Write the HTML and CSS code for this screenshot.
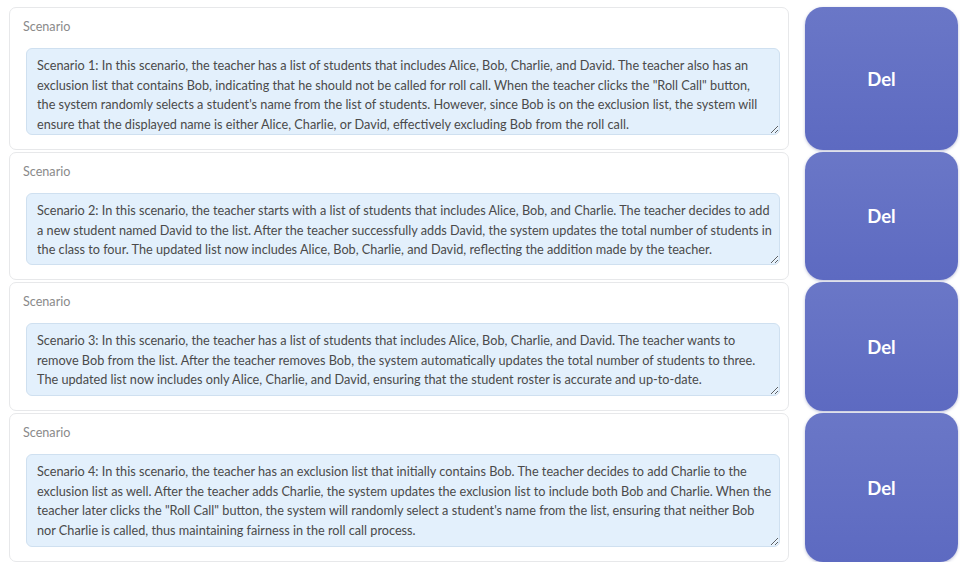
FILE: index.html
```html
<!DOCTYPE html>
<html>
<head>
<meta charset="utf-8">
<link rel="stylesheet" href="styles.css">
</head>
<body>
<main class="list">
  <div class="row">
    <section class="card">
      <label class="label">Scenario</label>
      <textarea class="box box-1" readonly>Scenario 1: In this scenario, the teacher has a list of students that includes Alice, Bob, Charlie, and David. The teacher also has an
exclusion list that contains Bob, indicating that he should not be called for roll call. When the teacher clicks the "Roll Call" button,
the system randomly selects a student's name from the list of students. However, since Bob is on the exclusion list, the system will
ensure that the displayed name is either Alice, Charlie, or David, effectively excluding Bob from the roll call.</textarea>
    </section>
    <button class="del">Del</button>
  </div>
  <div class="row">
    <section class="card">
      <label class="label">Scenario</label>
      <textarea class="box box-3" readonly>Scenario 2: In this scenario, the teacher starts with a list of students that includes Alice, Bob, and Charlie. The teacher decides to add
a new student named David to the list. After the teacher successfully adds David, the system updates the total number of students in
the class to four. The updated list now includes Alice, Bob, Charlie, and David, reflecting the addition made by the teacher.</textarea>
    </section>
    <button class="del">Del</button>
  </div>
  <div class="row">
    <section class="card">
      <label class="label">Scenario</label>
      <textarea class="box box-3b" readonly>Scenario 3: In this scenario, the teacher has a list of students that includes Alice, Bob, Charlie, and David. The teacher wants to
remove Bob from the list. After the teacher removes Bob, the system automatically updates the total number of students to three.
The updated list now includes only Alice, Charlie, and David, ensuring that the student roster is accurate and up-to-date.</textarea>
    </section>
    <button class="del">Del</button>
  </div>
  <div class="row">
    <section class="card">
      <label class="label">Scenario</label>
      <textarea class="box box-4" readonly>Scenario 4: In this scenario, the teacher has an exclusion list that initially contains Bob. The teacher decides to add Charlie to the
exclusion list as well. After the teacher adds Charlie, the system updates the exclusion list to include both Bob and Charlie. When the
teacher later clicks the "Roll Call" button, the system will randomly select a student's name from the list, ensuring that neither Bob
nor Charlie is called, thus maintaining fairness in the roll call process.</textarea>
    </section>
    <button class="del">Del</button>
  </div>
</main>
</body>
</html>
```
FILE: styles.css
```css
* { box-sizing: border-box; }
html, body { margin: 0; padding: 0; background: #ffffff; }
body { font-family: Lato, "Open Sans", sans-serif; }

.list {
  display: flex;
  flex-direction: column;
  gap: 2px;
  padding: 7px 2px 0 9px;
}

.row {
  display: flex;
  gap: 16px;
}

.card {
  flex: 1;
  display: flex;
  flex-direction: column;
  background: #fff;
  border: 1px solid #e7e8ea;
  border-radius: 7px;
  padding: 12px 8px 14px 16px;
}

.label {
  font-size: 12.6px;
  line-height: 14px;
  color: #8a8a8a;
  margin-left: -3px;
  margin-bottom: 14px;
}

.box {
  display: block;
  width: 100%;
  font-family: Lato, "Open Sans", sans-serif;
  font-size: 12.7px;
  line-height: 19.7px;
  color: #4a4a4a;
  background: #e3f0fc;
  border: 1px solid #cfe0f0;
  border-radius: 6px;
  padding: 7px 4px 5px 10px;
  white-space: pre;
  overflow: hidden;
  resize: vertical;
  outline: none;
}

.box-1 { height: 87px; }
.box-3 { height: 72px; }
.box-3b { height: 73px; }
.box-4 { height: 93px; }

.del {
  width: 153px;
  flex: none;
  border: none;
  border-radius: 18px;
  background: linear-gradient(180deg, #6a77c7 0%, #5d6ac1 100%);
  box-shadow: 0 1px 3px rgba(60, 70, 140, 0.35);
  color: #ffffff;
  font-family: Lato, "Open Sans", sans-serif;
  font-weight: 700;
  font-size: 18.5px;
  padding: 0;
}
```
